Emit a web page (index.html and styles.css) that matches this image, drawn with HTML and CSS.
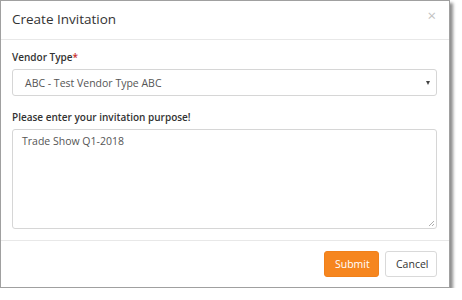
FILE: index.html
```html
<!DOCTYPE html>
<html>
<head>
<meta charset="utf-8">
<link rel="stylesheet" href="styles.css">
</head>
<body>
<div class="modal">
  <div class="modal-header">
    <h4 class="title">Create Invitation</h4>
    <span class="close">&times;</span>
  </div>
  <div class="modal-body">
    <label class="label">Vendor Type<span class="req">*</span></label>
    <div class="select">
      <span>ABC - Test Vendor Type ABC</span>
      <span class="caret"></span>
    </div>
    <label class="label label2">Please enter your invitation purpose!</label>
    <div class="textarea">
      <span>Trade Show Q1-2018</span>
      <svg class="grip" width="7" height="7" viewBox="0 0 7 7"><path d="M6 1 L1 6 M6 4 L4 6" stroke="#999" stroke-width="0.8"/></svg>
    </div>
  </div>
  <div class="modal-footer">
    <button class="btn btn-primary">Submit</button>
    <button class="btn btn-default">Cancel</button>
  </div>
</div>
</body>
</html>
```
FILE: styles.css
```css
html, body { margin: 0; padding: 0; background: #fff; }
body { font-family: "Open Sans", "Noto Sans", sans-serif; color: #333; }
.modal {
  width: 448px;
  height: 286px;
  border: 1px solid #a0a0a0;
  box-shadow: 3px 3px 3px rgba(0,0,0,0.45);
  background: #fff;
  display: flex;
  flex-direction: column;
}
.modal-header {
  height: 38px;
  flex: none;
  border-bottom: 1px solid #e8e8e8;
  display: flex;
  align-items: center;
  justify-content: space-between;
  padding: 0 13px 0 11px;
}
.title { margin: 0; font-size: 13.5px; font-weight: 400; color: #333; margin-top: -2px; }
.close { color: #c2c2c2; font-size: 15px; line-height: 1; margin-top: -9px; }
.modal-body {
  box-sizing: border-box;
  flex: none;
  padding: 10px 12px 0 11px;
  height: 201px;
  border-bottom: 1px solid #e8e8e8;
  display: flex;
  flex-direction: column;
}
.label { font-size: 10px; font-weight: 600; color: #333; line-height: 14px; }
.req { color: #c9302c; }
.select {
  box-sizing: border-box;
  margin-top: 5px;
  height: 27px;
  border: 1px solid #d6d6d6;
  border-radius: 3px;
  display: flex;
  align-items: center;
  justify-content: space-between;
  padding: 0 6px 0 12px;
  font-size: 10.5px;
  color: #555;
}
.caret { width: 0; height: 0; border-left: 2.5px solid transparent; border-right: 2.5px solid transparent; border-top: 4px solid #444; }
.label2 { margin-top: 14px; }
.textarea {
  box-sizing: border-box;
  margin-top: 5px;
  height: 100px;
  border: 1px solid #d6d6d6;
  border-radius: 3px;
  padding: 4px 9px;
  font-size: 10.5px;
  color: #555;
  position: relative;
}
.grip { position: absolute; right: 1px; bottom: 1px; }
.modal-footer {
  flex: 1;
  display: flex;
  justify-content: flex-end;
  align-items: center;
  gap: 6px;
  padding: 0 12px 0 0;
}
.btn {
  font-family: "Open Sans", "Noto Sans", sans-serif;
  font-size: 10.5px;
  height: 26px;
  border-radius: 3px;
  padding: 0 10px;
  cursor: pointer;
}
.btn-primary { background: #f6861f; border: 1px solid #f0801a; color: #fff; width: 55px; }
.btn-default { background: #fff; border: 1px solid #d9d9d9; color: #333; width: 52px; }
```
